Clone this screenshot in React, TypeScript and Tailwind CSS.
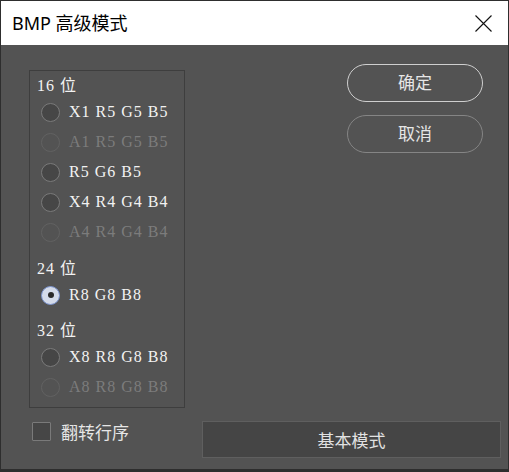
import React from 'react';

type Opt = { label: string; disabled?: boolean; checked?: boolean };

const groups: { title: string; h: string; options: Opt[] }[] = [
  {
    title: '16 位',
    h: 'h-[26px]',
    options: [
      { label: 'X1 R5 G5 B5' },
      { label: 'A1 R5 G5 B5', disabled: true },
      { label: 'R5 G6 B5' },
      { label: 'X4 R4 G4 B4' },
      { label: 'A4 R4 G4 B4', disabled: true },
    ],
  },
  {
    title: '24 位',
    h: 'h-[33px]',
    options: [{ label: 'R8 G8 B8', checked: true }],
  },
  {
    title: '32 位',
    h: 'h-[32px]',
    options: [
      { label: 'X8 R8 G8 B8' },
      { label: 'A8 R8 G8 B8', disabled: true },
    ],
  },
];

const serif = "font-['Liberation_Serif','Noto_Sans_CJK_SC',serif]";
const cjk = "font-['Noto_Sans_CJK_SC',sans-serif]";

function Radio({ opt }: { opt: Opt }) {
  let circle = 'border-[#7a7a7a] bg-[#464646]';
  if (opt.disabled) circle = 'border-[#626262] bg-[#535353]';
  if (opt.checked) circle = 'border-[#7d95cf] bg-[#d4dbea]';
  return (
    <div className="flex h-[30px] items-center pl-[11px]">
      <div className={`flex h-[19px] w-[19px] items-center justify-center rounded-full border-[1.5px] ${circle}`}>
        {opt.checked && <div className="h-[6px] w-[6px] rounded-full bg-[#2a2a2a]" />}
      </div>
      <span
        className={`ml-[9px] text-[16px] leading-5 tracking-[1px] ${serif} ${
          opt.disabled ? 'text-[#7c7c7c]' : 'text-[#f2f2f2]'
        }`}
      >
        {opt.label}
      </span>
    </div>
  );
}

export default function App() {
  return (
    <div className="flex h-[472px] w-[509px] flex-col border border-b-[3px] border-[#2e2e2e] bg-[#535353]">
      {/* Title bar */}
      <div className="flex h-[44px] items-center bg-white pl-[11px] pr-[16px]">
        <span className={`text-[18px] text-black font-['Noto_Sans','Noto_Sans_CJK_SC',sans-serif]`}>
          BMP 高级模式
        </span>
        <svg className="ml-auto" width="17" height="17" viewBox="0 0 17 17">
          <path d="M0.5 0.5 L16.5 16.5 M16.5 0.5 L0.5 16.5" stroke="#111" strokeWidth="1.1" />
        </svg>
      </div>

      <div className="flex">
        {/* Group box */}
        <div className="ml-[28px] mt-[25px] flex h-[338px] w-[156px] flex-col border border-[#3e3e3e]">
          {groups.map((g) => (
            <div key={g.title}>
              <div className={`flex items-end pb-[1px] pl-[7px] ${g.h}`}>
                <span className={`text-[16px] leading-5 tracking-[1px] text-[#f2f2f2] ${serif}`}>{g.title}</span>
              </div>
              {g.options.map((o) => (
                <Radio key={o.label} opt={o} />
              ))}
            </div>
          ))}
        </div>

        {/* Buttons */}
        <div className="ml-auto mr-[25px] mt-[19px] flex flex-col gap-[13px]">
          <button className={`h-[38px] w-[136px] rounded-full border-[1.5px] border-[#cfcfcf] pb-[2px] text-[17px] text-[#e6e6e6] ${cjk}`}>
            确定
          </button>
          <button className={`h-[38px] w-[136px] rounded-full border-[1.5px] border-[#858585] pb-[2px] text-[17px] text-[#e6e6e6] ${cjk}`}>
            取消
          </button>
        </div>
      </div>

      {/* Bottom row */}
      <div className="flex items-start">
        <div className="ml-[31px] mt-[11px] flex items-center gap-[10px]">
          <div className="h-[19px] w-[19px] rounded-[1px] border-[1.5px] border-[#7a7a7a] bg-[#464646]" />
          <span className={`text-[17px] text-[#e6e6e6] ${cjk}`}>翻转行序</span>
        </div>
        <button
          className={`ml-auto mr-[7px] mt-[13px] h-[37px] w-[299px] border border-[#5f5f5f] bg-[#454545] text-[17px] text-[#e2e2e2] ${cjk}`}
        >
          基本模式
        </button>
      </div>
    </div>
  );
}
